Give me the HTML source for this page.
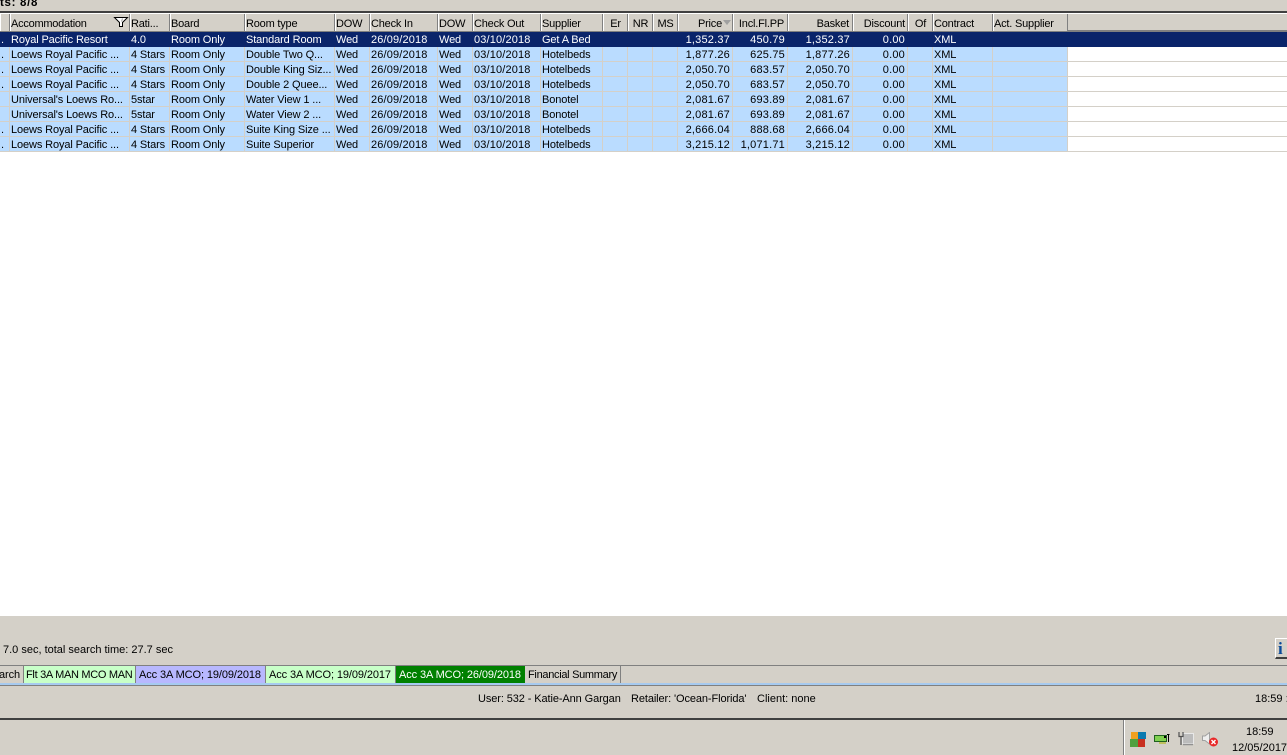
<!DOCTYPE html>
<html><head><meta charset="utf-8"><style>
html,body{margin:0;padding:0;background:#fff}
#p{position:relative;width:1287px;height:755px;overflow:hidden;background:#fff;font:11px "Liberation Sans",sans-serif;color:#000}
.a{position:absolute}
.t{position:absolute;white-space:nowrap;line-height:13px}
table{position:absolute;left:0;top:32px;border-collapse:separate;border-spacing:0;table-layout:fixed;width:1068px}
td{padding:2px 0 0 1px;border-right:1px solid #d4d0c8;border-bottom:1px solid #d4d0c8;background:#badcff;white-space:nowrap;overflow:hidden;line-height:12px;box-sizing:border-box;height:15px;letter-spacing:-.12px}
td.r{text-align:right;padding:2px 2px 0 0;letter-spacing:.2px}
td.d{letter-spacing:.15px}
tr.s td{background:#0a246a;color:#fff;border-color:#0a246a}
.h{position:absolute;top:14px;height:17px;background:#d4d0c8;border-left:1px solid #fff;border-right:1px solid #808080;box-sizing:border-box;line-height:20px;white-space:nowrap;padding-left:0;letter-spacing:-.2px}
.h.r{text-align:right;padding:0 3px 0 0}
.h.c{text-align:center;padding:0}
.l{position:absolute;left:0;right:0;height:1px;background:#d4d0c8}
.tab{position:absolute;top:666px;height:17px;line-height:18px;white-space:nowrap;box-sizing:border-box;border-right:1px solid #808080;padding-left:2px;overflow:hidden;letter-spacing:-.1px}
</style></head><body><div id="p">
<div class="a" style="left:0;top:0;width:1287px;height:11px;background:#d4d0c8"></div>
<div class="a" style="left:0;top:11px;width:1287px;height:2px;background:#404040"></div>
<div class="a" style="left:0;top:13px;width:1287px;height:1px;background:#fff"></div>
<div class="t" style="left:0;top:-3px;font-weight:bold;letter-spacing:.7px;font-size:11.5px">ts: 8/8</div>

<div class="a" style="left:0;top:14px;width:1287px;height:18px;background:#d4d0c8"></div>
<div class="a" style="left:0;top:30px;width:1287px;height:2px;background:#808080"></div>
<div class="h" style="left:0;width:10px"></div>
<div class="h" style="left:10px;width:120px;letter-spacing:-.25px">Accommodation</div>
<div class="h" style="left:130px;width:40px">Rati...</div>
<div class="h" style="left:170px;width:75px">Board</div>
<div class="h" style="left:245px;width:90px">Room type</div>
<div class="h" style="left:335px;width:35px">DOW</div>
<div class="h" style="left:370px;width:68px">Check In</div>
<div class="h" style="left:438px;width:35px">DOW</div>
<div class="h" style="left:473px;width:68px">Check Out</div>
<div class="h" style="left:541px;width:62px">Supplier</div>
<div class="h c" style="left:603px;width:25px">Er</div>
<div class="h c" style="left:628px;width:25px">NR</div>
<div class="h c" style="left:653px;width:25px">MS</div>
<div class="h r" style="left:678px;width:55px;padding-right:10px">Price</div>
<div class="h r" style="left:733px;width:55px">Incl.Fl.PP</div>
<div class="h r" style="left:788px;width:65px">Basket</div>
<div class="h r" style="left:853px;width:55px;padding-right:2px">Discount</div>
<div class="h c" style="left:908px;width:25px">Of</div>
<div class="h" style="left:933px;width:60px">Contract</div>
<div class="h" style="left:993px;width:75px">Act. Supplier</div>
<svg class="a" style="left:113px;top:16px" width="16" height="12" viewBox="0 0 16 12"><path d="M1.500 1.500H14.500L9.500 6.500V10.500H6.500V6.500Z" fill="#fff" stroke="#000" stroke-width="1"/><path d="M9.500 2.500L8.500 5.500" stroke="#a0a0a0"/></svg>
<svg class="a" style="left:723px;top:20px" width="8" height="5"><path d="M0 0H8L4 5Z" fill="#a0a0a0"/></svg>

<div class="a" style="left:0;top:32px;width:1287px;height:15px;background:#0a246a"></div>
<div class="l" style="top:61px"></div><div class="l" style="top:76px"></div><div class="l" style="top:91px"></div><div class="l" style="top:106px"></div><div class="l" style="top:121px"></div><div class="l" style="top:136px"></div><div class="l" style="top:151px"></div>

<table><colgroup><col style="width:10px"><col style="width:120px"><col style="width:40px"><col style="width:75px"><col style="width:90px"><col style="width:35px"><col style="width:68px"><col style="width:35px"><col style="width:68px"><col style="width:62px"><col style="width:25px"><col style="width:25px"><col style="width:25px"><col style="width:55px"><col style="width:55px"><col style="width:65px"><col style="width:55px"><col style="width:25px"><col style="width:60px"><col style="width:75px"></colgroup>
<tr class="s"><td>.</td><td>Royal Pacific Resort</td><td>4.0</td><td>Room Only</td><td>Standard Room</td><td>Wed</td><td class="d">26/09/2018</td><td>Wed</td><td class="d">03/10/2018</td><td>Get A Bed</td><td></td><td></td><td></td><td class="r">1,352.37</td><td class="r">450.79</td><td class="r">1,352.37</td><td class="r">0.00</td><td></td><td>XML</td><td></td></tr>
<tr><td>.</td><td>Loews Royal Pacific ...</td><td>4 Stars</td><td>Room Only</td><td>Double Two Q...</td><td>Wed</td><td class="d">26/09/2018</td><td>Wed</td><td class="d">03/10/2018</td><td>Hotelbeds</td><td></td><td></td><td></td><td class="r">1,877.26</td><td class="r">625.75</td><td class="r">1,877.26</td><td class="r">0.00</td><td></td><td>XML</td><td></td></tr>
<tr><td>.</td><td>Loews Royal Pacific ...</td><td>4 Stars</td><td>Room Only</td><td>Double King Siz...</td><td>Wed</td><td class="d">26/09/2018</td><td>Wed</td><td class="d">03/10/2018</td><td>Hotelbeds</td><td></td><td></td><td></td><td class="r">2,050.70</td><td class="r">683.57</td><td class="r">2,050.70</td><td class="r">0.00</td><td></td><td>XML</td><td></td></tr>
<tr><td>.</td><td>Loews Royal Pacific ...</td><td>4 Stars</td><td>Room Only</td><td>Double 2 Quee...</td><td>Wed</td><td class="d">26/09/2018</td><td>Wed</td><td class="d">03/10/2018</td><td>Hotelbeds</td><td></td><td></td><td></td><td class="r">2,050.70</td><td class="r">683.57</td><td class="r">2,050.70</td><td class="r">0.00</td><td></td><td>XML</td><td></td></tr>
<tr><td></td><td>Universal's Loews Ro...</td><td>5star</td><td>Room Only</td><td>Water View 1 ...</td><td>Wed</td><td class="d">26/09/2018</td><td>Wed</td><td class="d">03/10/2018</td><td>Bonotel</td><td></td><td></td><td></td><td class="r">2,081.67</td><td class="r">693.89</td><td class="r">2,081.67</td><td class="r">0.00</td><td></td><td>XML</td><td></td></tr>
<tr><td></td><td>Universal's Loews Ro...</td><td>5star</td><td>Room Only</td><td>Water View 2 ...</td><td>Wed</td><td class="d">26/09/2018</td><td>Wed</td><td class="d">03/10/2018</td><td>Bonotel</td><td></td><td></td><td></td><td class="r">2,081.67</td><td class="r">693.89</td><td class="r">2,081.67</td><td class="r">0.00</td><td></td><td>XML</td><td></td></tr>
<tr><td>.</td><td>Loews Royal Pacific ...</td><td>4 Stars</td><td>Room Only</td><td>Suite King Size ...</td><td>Wed</td><td class="d">26/09/2018</td><td>Wed</td><td class="d">03/10/2018</td><td>Hotelbeds</td><td></td><td></td><td></td><td class="r">2,666.04</td><td class="r">888.68</td><td class="r">2,666.04</td><td class="r">0.00</td><td></td><td>XML</td><td></td></tr>
<tr><td>.</td><td>Loews Royal Pacific ...</td><td>4 Stars</td><td>Room Only</td><td>Suite Superior</td><td>Wed</td><td class="d">26/09/2018</td><td>Wed</td><td class="d">03/10/2018</td><td>Hotelbeds</td><td></td><td></td><td></td><td class="r">3,215.12</td><td class="r">1,071.71</td><td class="r">3,215.12</td><td class="r">0.00</td><td></td><td>XML</td><td></td></tr>
</table>

<div class="a" style="left:0;top:616px;width:1287px;height:139px;background:#d4d0c8"></div>
<div class="t" style="left:3px;top:644px">7.0 sec, total search time: 27.7 sec</div>
<div class="a" style="left:1275px;top:638px;width:12px;height:21px;background:#d4d0c8;border-left:1px solid #fff;border-top:1px solid #fff;border-bottom:2px solid #404040;box-sizing:border-box;font:bold 17px 'Liberation Serif',serif;color:#0a4a9a;line-height:20px;padding-left:2px">i</div>

<div class="a" style="left:0;top:665px;width:1287px;height:1px;background:#808080"></div>
<div class="tab" style="left:-1px;width:25px;padding-left:0">arch</div>
<div class="tab" style="left:24px;width:112px;background:#c8ffc8;letter-spacing:-.3px">Flt 3A MAN MCO MAN</div>
<div class="tab" style="left:136px;width:130px;background:#b8b8ff;padding-left:3px">Acc 3A MCO; 19/09/2018</div>
<div class="tab" style="left:266px;width:130px;background:#c8ffc8;padding-left:3px">Acc 3A MCO; 19/09/2017</div>
<div class="tab" style="left:396px;width:129px;background:#008000;color:#fff;padding-left:3px;border-right:0">Acc 3A MCO; 26/09/2018</div>
<div class="tab" style="left:525px;width:96px;padding-left:3px;letter-spacing:-.3px">Financial Summary</div>
<div class="a" style="left:0;top:683px;width:1287px;height:2px;background:#a6caf0"></div>
<div class="a" style="left:0;top:685px;width:1287px;height:1px;background:#808080"></div>
<div class="t" style="left:478px;top:693px;letter-spacing:-.1px">User: 532 - Katie-Ann Gargan</div>
<div class="t" style="left:631px;top:693px;letter-spacing:-.1px">Retailer: 'Ocean-Florida'</div>
<div class="t" style="left:757px;top:693px">Client: none</div>
<div class="t" style="left:1255px;top:693px">18:59 :</div>
<div class="a" style="left:0;top:718px;width:1287px;height:2px;background:#404040"></div>
<div class="a" style="left:1123px;top:720px;width:1px;height:35px;background:#808080"></div>
<div class="a" style="left:1124px;top:720px;width:1px;height:35px;background:#fff"></div>
<svg class="a" style="left:1130px;top:732px" width="16" height="16"><rect x="1" y="0" width="7" height="7" fill="#f0a020"/><rect x="8" y="0" width="8" height="7" fill="#0a7ab0"/><rect x="0" y="7" width="8" height="8" fill="#50a040"/><rect x="8" y="7" width="7" height="8" fill="#c83020"/></svg>
<svg class="a" style="left:1154px;top:734px" width="16" height="10"><rect x=".5" y="1.500" width="12" height="6" fill="#80d050" stroke="#206020"/><path d="M13 .5H15.500M14.500 .5V8" stroke="#000" fill="none"/><rect x="10" y="2" width="2" height="2" fill="#000"/><path d="M5 9H12" stroke="#c0c060" stroke-width="2"/></svg>
<svg class="a" style="left:1178px;top:731px" width="17" height="15"><rect x="4.500" y="2.500" width="11" height="10" fill="#bcbcbc" stroke="#e8e8e8"/><path d="M1 1V5.500H5V1M3 5.500V14" fill="none" stroke="#505050" stroke-width="1.200"/><path d="M5 13.500H15" stroke="#909090" stroke-width="1.500"/></svg>
<svg class="a" style="left:1202px;top:732px" width="17" height="15"><path d="M.5 4H3L7.500 .5V12L3 8.500H.5Z" fill="#eeeeee" stroke="#a0a0a0"/><circle cx="11.500" cy="10" r="4.500" fill="#e82828"/><path d="M9.500 8L13.500 12M13.500 8L9.500 12" stroke="#fff" stroke-width="1.400"/></svg>
<div class="t" style="left:1246px;top:726px">18:59</div>
<div class="t" style="left:1232px;top:742px">12/05/2017</div>
</div></body></html>
